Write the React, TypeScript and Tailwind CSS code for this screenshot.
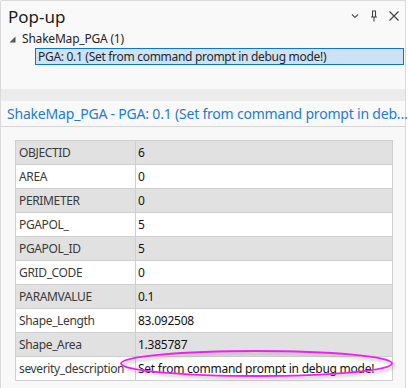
import React from "react";

const rows: [string, string][] = [
  ["OBJECTID", "6"],
  ["AREA", "0"],
  ["PERIMETER", "0"],
  ["PGAPOL_", "5"],
  ["PGAPOL_ID", "5"],
  ["GRID_CODE", "0"],
  ["PARAMVALUE", "0.1"],
  ["Shape_Length", "83.092508"],
  ["Shape_Area", "1.385787"],
  ["severity_description", "Set from command prompt in debug mode!"],
];

export default function App() {
  return (
    <div
      className="relative w-[408px] h-[388px] bg-white overflow-hidden"
      style={{ fontFamily: '"Noto Sans", "Open Sans", sans-serif' }}
    >
      <div className="w-[406px] h-[388px] border-l border-t border-r border-[#dadada] rounded-tl-[2px] bg-[#f9f9f9] flex flex-col">
        {/* Title bar */}
        <div className="flex items-center h-[29px] shrink-0 pl-[7px] pr-[5px]">
          <div className="text-[17px] leading-[22px] text-[#1b1b1b] pt-[2px]">Pop-up</div>
          <div className="ml-auto flex items-center gap-[9px] text-[#555]">
            <svg width="10" height="10" viewBox="0 0 10 10" className="mt-[1px]">
              <path d="M2 3.5 L5 6.5 L8 3.5" fill="none" stroke="#555" strokeWidth="1.2" />
            </svg>
            <svg width="10" height="12" viewBox="0 0 10 12">
              <path d="M3 1 H7 M3.5 1 V7 M6.5 1 V7 M2 7 H8 M5 7 V11.5" fill="none" stroke="#444" strokeWidth="1.1" />
            </svg>
            <svg width="12" height="12" viewBox="0 0 12 12">
              <path d="M1.5 1.5 L10.5 10.5 M10.5 1.5 L1.5 10.5" fill="none" stroke="#444" strokeWidth="1.2" />
            </svg>
          </div>
        </div>
        {/* Tree */}
        <div className="flex items-center h-[18px] shrink-0 pl-[8px]">
          <svg width="7" height="7" viewBox="0 0 7 7">
            <path d="M6.5 0.5 L6.5 6.5 L0.5 6.5 Z" fill="#555" />
          </svg>
          <span className="ml-[6px] text-[12px] leading-[16px] text-[#262626] tracking-[-0.2px]">ShakeMap_PGA (1)</span>
        </div>
        <div className="ml-[34px] mr-[1px] h-[17px] shrink-0 border border-[#0b78d0] bg-[#cce2f5] flex items-center pl-[2px]">
          <span className="text-[12px] leading-[15px] text-[#262626] tracking-[-0.3px] whitespace-nowrap">
            PGA: 0.1 (Set from command prompt in debug mode!)
          </span>
        </div>
        <div className="h-[24px] shrink-0" />
        <div className="h-[12px] shrink-0 bg-[#ececec]" />
        {/* Header */}
        <div className="h-[26px] shrink-0 flex items-center pl-[6px] border-b border-[#d6d6d6] bg-[#f9f9f9]">
          <span className="text-[14px] leading-[18px] text-[#1e7cd0] whitespace-nowrap tracking-[-0.2px]">
            ShakeMap_PGA - PGA: 0.1 (Set from command prompt in deb...
          </span>
        </div>
        {/* Content */}
        <div className="flex-1 bg-[#f8f8f8] pt-[13px] pl-[14px] pr-[12px]">
          <div className="border border-[#cfcfcf]">
            {rows.map(([k, v], i) => (
              <div
                key={k}
                className={`flex ${i > 0 ? "h-[24px] border-t border-[#cfcfcf]" : "h-[23px]"} ${
                  i % 2 === 0 ? "bg-[#e1e1e1]" : "bg-white"
                }`}
              >
                <div className="w-[120px] shrink-0 border-r border-[#cfcfcf] pl-[3px] flex items-center text-[12px] text-[#3a3a3a] whitespace-nowrap overflow-hidden tracking-[-0.35px]">
                  {k}
                </div>
                <div className="pl-[2px] flex items-center text-[12px] text-[#111] whitespace-nowrap tracking-[-0.25px]">
                  {v}
                </div>
              </div>
            ))}
          </div>
        </div>
      </div>
      {/* Annotation ellipse */}
      <svg className="absolute left-0 top-0 pointer-events-none" width="408" height="388">
        <defs>
          <filter id="sh" x="-10%" y="-50%" width="120%" height="200%">
            <feGaussianBlur stdDeviation="1.5" />
          </filter>
        </defs>
        <ellipse cx="259" cy="366" rx="135" ry="12.5" fill="none" stroke="#888" strokeWidth="2" opacity="0.5" filter="url(#sh)" />
        <ellipse cx="256.5" cy="363.5" rx="135.5" ry="12.5" fill="none" stroke="#f21ef2" strokeWidth="1.8" />
      </svg>
    </div>
  );
}
